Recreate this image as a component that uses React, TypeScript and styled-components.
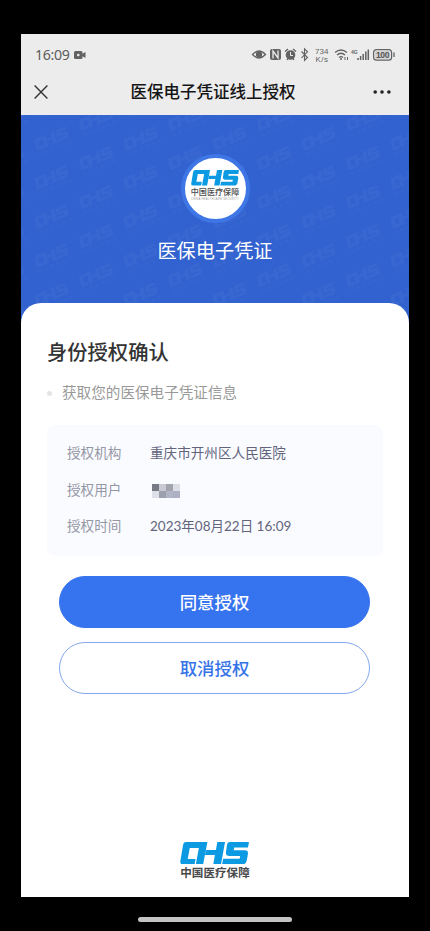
import React from 'react';
import styled, { createGlobalStyle } from 'styled-components';

const Global = createGlobalStyle`
  * { box-sizing: border-box; }
  body { margin: 0; background: #000; font-family: Roboto, "Noto Sans CJK SC", sans-serif; }
`;

const Device = styled.div`
  width: 430px;
  height: 931px;
  padding: 34px 21px 0;
  background: #000;
  display: flex;
  flex-direction: column;
  align-items: center;
  overflow: hidden;
`;

const Screen = styled.div`
  width: 388px;
  height: 863px;
  flex: none;
  display: flex;
  flex-direction: column;
  background: #fff;
`;

const StatusBar = styled.div`
  height: 40px;
  flex: none;
  display: flex;
  justify-content: space-between;
  padding: 1px 14px 0;
  background: #ececec;
  color: #5c5c5c;
`;

const Clock = styled.div`
  display: flex;
  align-items: center;
  gap: 4px;
  font: 400 14.2px "Noto Sans", sans-serif;
  letter-spacing: -0.35px;
`;

const NavBar = styled.div`
  height: 41px;
  flex: none;
  display: grid;
  grid-template-columns: 40px 1fr 44px;
  align-items: center;
  padding: 0 0 6px;
  background: #ececec;
`;

const NavTitle = styled.div`
  padding-top: 2px;
  text-align: center;
  font-size: 16.5px;
  line-height: 24px;
  font-weight: 500;
  color: #151515;
`;

const CloseButton = styled.div`
  display: flex;
  justify-content: center;
`;

const MoreButton = styled.div`
  display: flex;
  justify-content: flex-end;
  padding-right: 17.5px;
`;

const Hero = styled.div`
  height: 208px;
  flex: none;
  display: grid;
  background: #3262cf;
`;

const Pattern = styled.svg`
  grid-area: 1 / 1;
`;

const HeroContent = styled.div`
  grid-area: 1 / 1;
  z-index: 1;
  display: flex;
  flex-direction: column;
  align-items: center;
  padding-top: 39px;
`;

const Badge = styled.div`
  width: 69px;
  height: 69px;
  border: 4px solid #3f76e6;
  border-radius: 50%;
  background: #fff;
  display: flex;
  justify-content: center;
  padding-top: 12px;
`;

const HeroTitle = styled.div`
  margin-top: 14px;
  font-size: 19.2px;
  line-height: 30px;
  color: #fff;
`;

const Sheet = styled.div`
  flex: 1;
  margin-top: -20px;
  z-index: 2;
  border-radius: 20px 20px 0 0;
  background: #fff;
  display: flex;
  flex-direction: column;
  padding: 34px 26px 0 26px;
`;

const Heading = styled.div`
  font-size: 20.3px;
  line-height: 32px;
  font-weight: 500;
  color: #333;
`;

const Scope = styled.div`
  display: flex;
  align-items: center;
  gap: 10px;
  margin-top: 12px;
  font-size: 14.6px;
  line-height: 24px;
  color: #999;
`;

const Dot = styled.span`
  width: 5px;
  height: 5px;
  border-radius: 50%;
  background: #e4e4e6;
`;

const InfoCard = styled.div`
  height: 131px;
  margin-top: 20px;
  border-radius: 8px;
  background: #fafbff;
  padding: 9px 20px;
  display: flex;
  flex-direction: column;
`;

const InfoRow = styled.div`
  height: 36.6px;
  display: grid;
  grid-template-columns: 83px 1fr;
  align-items: center;
  font-size: 13.6px;
`;

const Label = styled.span`
  color: #9597a5;
`;

const Value = styled.span<{ $numeric?: boolean }>`
  color: #62647c;
  ${(p) => p.$numeric && 'font-family: Lato, "Noto Sans CJK SC", sans-serif; font-size: 13.5px;'}
`;

const Mosaic = styled.div`
  display: grid;
  grid-template-columns: repeat(4, 7px);
  grid-auto-rows: 7px;
  margin: 5px 0 0 2px;
`;

const MosaicCell = styled.span<{ $tone: string }>`
  background: ${(p) => p.$tone};
`;

const Actions = styled.div`
  display: flex;
  flex-direction: column;
  gap: 14px;
  margin: 20px 13px 0 12px;
`;

const Button = styled.button<{ $primary?: boolean }>`
  height: 52px;
  border-radius: 26px;
  border: 1px solid ${(p) => (p.$primary ? '#3673ef' : '#83a9ec')};
  background: ${(p) => (p.$primary ? '#3673ef' : '#fff')};
  color: ${(p) => (p.$primary ? '#fff' : '#3673e8')};
  font: 500 17.4px/26px "Noto Sans CJK SC", sans-serif;
  padding: 0 0 1px;
`;

const Footer = styled.div`
  margin-top: auto;
  padding-bottom: 15px;
  display: flex;
  justify-content: center;
`;

const Brand = styled.div<{ $small?: boolean }>`
  display: flex;
  flex-direction: column;
  align-items: center;
  white-space: nowrap;
  font-weight: ${(p) => (p.$small ? 500 : 700)};
  font-size: ${(p) => (p.$small ? '8.1px' : '11.6px')};
  line-height: ${(p) => (p.$small ? '12px' : '18px')};
  color: #4a4a4c;
`;

const BrandEnglish = styled.span`
  font: 400 2.7px/3px "Liberation Sans", sans-serif;
  letter-spacing: 0.28px;
  color: #999;
`;

const HomeBar = styled.div`
  width: 154px;
  height: 5px;
  margin-top: 20px;
  border-radius: 3px;
  background: #c4c4c4;
`;

const LogoShapes = () => (
  <>
    <path d="M6 0H27L22.800 22H15.600L18.600 5.800H9.600L7.600 16.700H15.300L14.400 22H2.800Q-.2 22 .3 19L3 3Q3.500 0 6 0Z" />
    <path d="M36.800 0H44.400L40.400 22H32.800L34.400 12.900H24.600L25.500 8H35.400Z" />
    <path d="M49 0H68L67 5.500H53.400L52.900 8.200H64Q67.500 8.200 66.900 12L65.900 18Q65.200 22 61.300 22H41.500L42.500 16.500H58.800L59.300 13.800H48.700Q44.700 13.800 45.300 10L46.300 3Q46.800 0 49 0Z" />
  </>
);

const Logo = ({ width }: { width: number }) => (
  <svg width={width} height={(width * 22) / 68} viewBox="0 0 68 22" fill="#0c9ae3">
    <LogoShapes />
  </svg>
);

const StatusIcons = () => (
  <svg width="144" height="38" viewBox="251 35 144 38" fill="none" stroke="#626262" strokeWidth="1.3">
    <path d="M252.500 54.500Q259 47.500 265.500 54.500Q259 61.500 252.500 54.500Z" />
    <circle cx="259" cy="54.500" r="2.500" fill="#626262" />
    <rect x="270" y="49" width="11" height="11" rx="2" fill="#626262" stroke="none" />
    <path d="M273 58.500V51L278 58V50.500" stroke="#ececec" />
    <circle cx="290.500" cy="55" r="4.800" fill="#626262" stroke="none" />
    <path d="M285 51.500L288 49M296 51.500L293 49M287 60L288 58.500M294 60L293 58.500" />
    <path d="M290.500 52V55.500H293" stroke="#ececec" strokeWidth="1" />
    <path d="M301.500 51.500L307.500 57.500L304.500 60.500V48.800L307.500 51.800L301.500 57.800" strokeWidth="1.100" />
    <g fill="#626262" stroke="none" fontFamily="Liberation Sans, sans-serif">
      <text x="315" y="53.500" fontSize="8" textLength="13.500">734</text>
      <text x="315.500" y="61.500" fontSize="8" textLength="12.500">K/s</text>
      <text x="351" y="53.500" fontSize="5" fontWeight="700">4G</text>
    </g>
    <path d="M335 52.500Q341 47.500 347 52.500M337 55Q341 51.500 345 55M339 57.500Q341 55.700 343 57.500" />
    <circle cx="341" cy="59" r="1" fill="#626262" stroke="none" />
    <path d="M345 60V57M347.500 57V60" strokeWidth="1" />
    <path d="M358 60V58M360.600 60V56M363.200 60V54M365.800 60V51.500M368.300 60V49.500" strokeWidth="1.500" />
    <rect x="373.600" y="49.600" width="18" height="10.600" rx="3" strokeWidth="1.200" />
    <rect x="375" y="51" width="15.200" height="7.800" rx="1" fill="#d2d2d2" stroke="none" />
    <path d="M394 52.500V57" />
    <text x="375.900" y="58" fontSize="8.500" fontWeight="700" fontFamily="Liberation Sans, sans-serif" fill="#555" stroke="none" textLength="13.500">100</text>
  </svg>
);

const Mark = ({ x, y }: { x: number; y: number }) => (
  <g transform={`translate(${x} ${y}) rotate(-23) scale(.53)`}>
    <g transform="translate(-34 -14)">
      <LogoShapes />
      <path d="M0 30H68" stroke="#6f96ed" strokeWidth="7" strokeDasharray="8 4" opacity=".4" />
    </g>
  </g>
);

const marks: [number, number][] = [];
for (let col = -1; col < 10; col++) {
  for (let row = -1; row < 6; row++) {
    marks.push([31 + col * 44.5, 25 + row * 39 + (col % 2 === 0 ? 0 : 19.5)]);
  }
}

const tones = ['#777985', '#c9c9d3', '#a1a3ad', '#dddee5', '#dedfe8', '#9c9fad', '#b1b4c6', '#adb0c5'];

export default function App() {
  return (
    <Device>
      <Global />
      <Screen>
        <StatusBar>
          <Clock>
            16:09
            <svg width="12" height="8" viewBox="0 0 12 8" fill="#626262">
              <rect width="8.500" height="8" rx="1.500" />
              <path d="M8 3L11.500 1V7L8 5Z" />
              <circle cx="4.300" cy="4" r="1.300" fill="#ececec" />
            </svg>
          </Clock>
          <StatusIcons />
        </StatusBar>
        <NavBar>
          <CloseButton>
            <svg width="14" height="14" viewBox="0 0 14 14" stroke="#333" strokeWidth="1.400">
              <path d="M.6 .6L13.400 13.400M13.400 .6L.6 13.400" />
            </svg>
          </CloseButton>
          <NavTitle>医保电子凭证线上授权</NavTitle>
          <MoreButton>
            <svg width="19" height="4" viewBox="0 0 19 4" fill="#222">
              <circle cx="2.200" cy="2" r="1.800" />
              <circle cx="9" cy="2" r="1.800" />
              <circle cx="15.900" cy="2" r="1.800" />
            </svg>
          </MoreButton>
        </NavBar>
        <Hero>
          <Pattern width="388" height="208" fill="#6f96ed" opacity=".1">
            {marks.map(([x, y]) => (
              <Mark key={`${x}-${y}`} x={x} y={y} />
            ))}
          </Pattern>
          <HeroContent>
            <Badge>
              <Brand $small>
                <Logo width={48} />
                中国医疗保障
                <BrandEnglish>CHINA HEALTHCARE SECURITY</BrandEnglish>
              </Brand>
            </Badge>
            <HeroTitle>医保电子凭证</HeroTitle>
          </HeroContent>
        </Hero>
        <Sheet>
          <Heading>身份授权确认</Heading>
          <Scope>
            <Dot />
            获取您的医保电子凭证信息
          </Scope>
          <InfoCard>
            <InfoRow>
              <Label>授权机构</Label>
              <Value>重庆市开州区人民医院</Value>
            </InfoRow>
            <InfoRow>
              <Label>授权用户</Label>
              <Mosaic>
                {tones.map((tone) => (
                  <MosaicCell key={tone} $tone={tone} />
                ))}
              </Mosaic>
            </InfoRow>
            <InfoRow>
              <Label>授权时间</Label>
              <Value $numeric>2023年08月22日 16:09</Value>
            </InfoRow>
          </InfoCard>
          <Actions>
            <Button $primary>同意授权</Button>
            <Button>取消授权</Button>
          </Actions>
          <Footer>
            <Brand>
              <Logo width={69} />
              中国医疗保障
            </Brand>
          </Footer>
        </Sheet>
      </Screen>
      <HomeBar />
    </Device>
  );
}
